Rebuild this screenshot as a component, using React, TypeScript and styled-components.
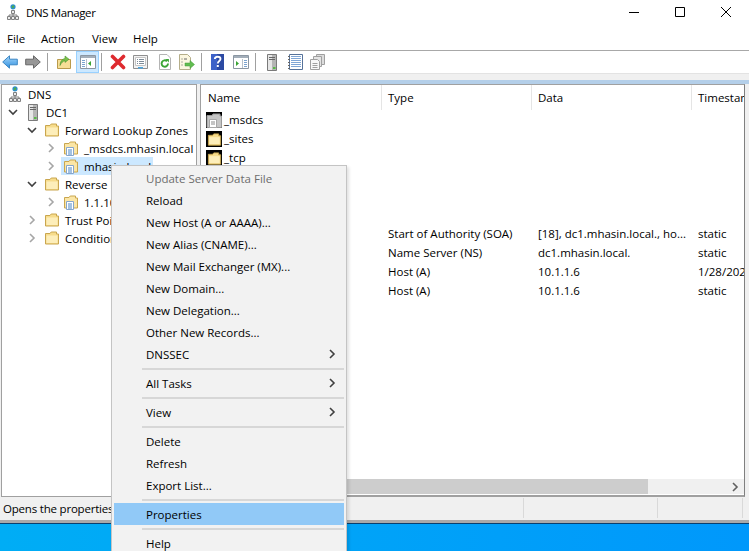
import * as React from "react";
import styled, { createGlobalStyle } from "styled-components";

const GlobalStyle = createGlobalStyle`
  html, body {
    margin: 0;
    padding: 0;
    background: #fff;
  }

  body {
    font-family: "Open Sans", "Noto Sans", sans-serif;
    font-size: 11.5px;
    color: #000;
  }
`;

const Page = styled.div`
  position: relative;
  display: flex;
  flex-direction: column;
  width: 749px;
  height: 551px;
  overflow: hidden;
  background: #fff;
`;

const TitleBar = styled.div`
  display: flex;
  align-items: center;
  height: 27px;
  padding: 0 0 3px 5px;
  box-sizing: border-box;
  flex: none;
`;

const TitleText = styled.span`
  margin-left: 5px;
  letter-spacing: -0.4px;
`;

const WindowButtons = styled.div`
  display: flex;
  margin-left: auto;
  margin-right: 18px;
  gap: 36px;
  align-items: center;
`;

const MenuBar = styled.div`
  display: grid;
  grid-template-columns: 34px 51px 41px auto;
  align-items: center;
  justify-content: start;
  height: 23px;
  padding-left: 7px;
  flex: none;
  border-bottom: 1px solid #a8a8a8;
`;

const Toolbar = styled.div`
  display: flex;
  align-items: center;
  height: 22px;
  flex: none;
  padding-left: 2px;
  border-bottom: 1px solid #e3e3e3;
`;

const ToolButton = styled.div<{ $w: number; $active?: boolean }>`
  display: flex;
  align-items: center;
  justify-content: center;
  width: ${(p) => p.$w}px;
  height: 22px;
  box-sizing: border-box;
  flex: none;
  ${(p) => (p.$active ? "background: #cce8ff; border: 1px solid #99d1ff;" : "")}
`;

const ToolSep = styled.div<{ $l: number; $r: number }>`
  width: 1px;
  height: 18px;
  background: #a0a0a0;
  flex: none;
  margin: 0 ${(p) => p.$r}px 0 ${(p) => p.$l}px;
`;

const Strip = styled.div`
  height: 6px;
  flex: none;
  background: #f0f0f0;
`;

const BlueLine = styled.div`
  height: 4px;
  flex: none;
  background: #b4cfe9;
`;

const Panes = styled.div`
  display: flex;
  flex: none;
  height: 413px;
  background: #f0f0f0;
  padding-left: 1px;
  padding-right: 4px;
`;

const TreePane = styled.div`
  width: 196px;
  box-sizing: border-box;
  flex: none;
  background: #fff;
  border: 1px solid #a0a0a0;
  overflow: hidden;
`;

const TreeRow = styled.div<{ $pad: number }>`
  display: flex;
  align-items: center;
  height: 18px;
  padding-left: ${(p) => p.$pad}px;
  white-space: nowrap;
`;

const Expander = styled.span`
  display: flex;
  align-items: center;
  justify-content: center;
  width: 16px;
  margin-right: 2px;
  flex: none;
`;

const TreeItem = styled.span<{ $selected?: boolean }>`
  display: inline-flex;
  align-items: center;
  gap: 5px;
  height: 18px;
  padding: 0 2px;
  background: ${(p) => (p.$selected ? "#cce8ff" : "transparent")};
`;

const IconBox = styled.span`
  display: flex;
  justify-content: center;
  width: 16px;
`;

const ListPane = styled.div`
  flex: 1;
  min-width: 0;
  margin-left: 3px;
  display: flex;
  flex-direction: column;
  background: #fff;
  border: 1px solid #a0a0a0;
  border-right-color: #808080;
  border-bottom-width: 2px;
  overflow: hidden;
`;

const ListRow = styled.div<{ $header?: boolean }>`
  display: grid;
  grid-template-columns: 181px 150px 160px 1fr;
  height: ${(p) => (p.$header ? "25px" : "19px")};
  flex: none;
  align-items: center;
  white-space: nowrap;
  overflow: hidden;
`;

const HeaderCell = styled.div`
  height: 100%;
  display: flex;
  align-items: center;
  padding-left: 6px;
  border-right: 1px solid #e5e5e5;
  box-sizing: border-box;
  overflow: hidden;

  &:first-child {
    padding-left: 7px;
  }

  &:last-child {
    border-right: 0;
  }
`;

const NameCell = styled.div`
  display: flex;
  align-items: center;
  gap: 2px;
  padding-left: 5px;
`;

const Cell = styled.div`
  padding-left: 6px;
  overflow: hidden;
`;

// name column folders sit on a black box, as in the screenshot
const ListIconBox = styled.span`
  display: flex;
  align-items: flex-end;
  justify-content: center;
  width: 16px;
  height: 16px;
  background: #000;
  flex: none;
`;

const ScrollBar = styled.div`
  margin-top: auto;
  height: 15px;
  flex: none;
  margin-bottom: 1px;
  display: flex;
  background: #f0f0f0;
`;

const ScrollThumb = styled.div`
  width: 447px;
  background: #cdcdcd;
  flex: none;
`;

const ScrollArrow = styled.div`
  margin-left: auto;
  width: 18px;
  display: flex;
  align-items: center;
  justify-content: center;
`;

const StatusBar = styled.div`
  display: grid;
  grid-template-columns: 524px 134px 85px 1fr;
  height: 23px;
  flex: none;
  background: #f0f0f0;
  white-space: nowrap;
`;

const StatusCell = styled.div`
  display: flex;
  align-items: center;
  padding-left: 3px;
  margin: 1px 0 2px;
  border-right: 1px solid #d9d9d9;
  overflow: hidden;
  letter-spacing: -0.2px;
`;

const WindowShadow = styled.div`
  height: 3px;
  flex: none;
  background: #a9a9a9;
`;

const Desktop = styled.div`
  flex: 1;
  border-top: 1px solid #0a3f6e;
  background: linear-gradient(90deg, #00adf5 0%, #0098fb 100%);
`;

const ContextMenu = styled.div`
  position: absolute;
  left: 111px;
  top: 165px;
  width: 236px;
  box-sizing: border-box;
  padding: 1px 2px 2px;
  background: #f2f2f2;
  border: 1px solid #c4c4c4;
  box-shadow: 2px 2px 3px rgba(0, 0, 0, 0.12);
`;

const MenuItem = styled.div<{ $disabled?: boolean; $hover?: boolean }>`
  display: flex;
  align-items: center;
  justify-content: space-between;
  height: 22px;
  padding: 0 8px 0 32px;
  color: ${(p) => (p.$disabled ? "#6d6d6d" : "#000")};
  background: ${(p) => (p.$hover ? "#91c9f7" : "transparent")};
`;

const MenuSep = styled.div`
  height: 2px;
  margin: 3px 0 2px 28px;
  background: #d7d7d7;
`;

const Folder = ({ size = 16 }: { size?: number }) => (
  <svg width={size} height={size} viewBox="0 0 16 16">
    <path d="M1.5 3.5h4.5l1.2-1.5h5.3v2h2v10h-13z" fill="#f7dc8b" stroke="#c9a64f" />
    <path d="M2.5 5.5h11v7.5h-11z" fill="#fdeeba" />
  </svg>
);

const ZoneFolder = () => (
  <svg width="16" height="16" viewBox="0 0 16 16">
    <path d="M1.5 3.5h4.5l1.2-1.5h5.3v2h2v10h-13z" fill="#fbe6a6" stroke="#c9a64f" />
    <path d="M3.5 7.5h7v8h-7z" fill="#fff" stroke="#86a6cc" />
    <path d="M5 10h4M5 12h4M5 14h4" stroke="#4a86c5" />
  </svg>
);

const GrayFolder = () => (
  <svg width="16" height="15" viewBox="0 0 16 15">
    <path d="M1 2.5h5l1-1.5h7v2h1.5v11.5H1z" fill="#c6c6c6" stroke="#9a9a9a" />
    <path d="M3.5 6.5h7v8h-7z" fill="#fff" stroke="#a8a8a8" />
    <path d="M5 9h4M5 11h4" stroke="#8a8a8a" />
  </svg>
);

const DnsIcon = () => (
  <svg width="16" height="17" viewBox="0 0 16 17">
    <circle cx="8" cy="2.8" r="2.6" fill="#2e8fd0" />
    <path d="M6.5 2.5l2-1.5 1 2-2 1.4z" fill="#4cae4c" />
    <path d="M6.5 6.5h3v3h-3zM2.5 12.5h3v3h-3zM10.5 12.5h3v3h-3zM6.5 12.5h3v3h-3z" fill="#ececec" stroke="#808080" />
    <path d="M8 9.5v3M4 12.5V11h8v1.5" fill="none" stroke="#808080" />
  </svg>
);

const ServerIcon = () => (
  <svg width="10" height="17" viewBox="0 0 10 17">
    <path d="M.5 .5h9v16h-9z" fill="#b5b5b5" stroke="#7a7a7a" />
    <path d="M1 1h4v15H1z" fill="#e6e6e6" />
    <path d="M2 3.5h6M2 5.5h6" stroke="#666" />
    <path d="M6 13h2.5v2H6z" fill="#58b947" />
  </svg>
);

const ChevronDown = () => (
  <svg width="10" height="8" viewBox="0 0 10 8">
    <path d="M1 2l4 4 4-4" fill="none" stroke="#404040" strokeWidth="1.6" />
  </svg>
);

const ChevronRight = ({ color = "#a6a6a6" }: { color?: string }) => (
  <svg width="8" height="10" viewBox="0 0 8 10">
    <path d="M2 1l4 4-4 4" fill="none" stroke={color} strokeWidth="1.6" />
  </svg>
);

const BackArrow = () => (
  <svg width="16" height="14" viewBox="0 0 16 14">
    <defs>
      <linearGradient id="backFill" x1="0" y1="0" x2="0" y2="1">
        <stop offset="0" stopColor="#a8d8fa" />
        <stop offset="1" stopColor="#2f8fe0" />
      </linearGradient>
    </defs>
    <path d="M.7 7L7.5 .8v3.4h7.8v5.6H7.5v3.4z" fill="url(#backFill)" stroke="#3b86c4" />
  </svg>
);

const ForwardArrow = () => (
  <svg width="16" height="14" viewBox="0 0 16 14">
    <path d="M15.3 7L8.5 .8v3.4H.7v5.6h7.8v3.4z" fill="#979797" stroke="#666" />
  </svg>
);

const UpFolder = () => (
  <svg width="16" height="16" viewBox="0 0 16 16">
    <path d="M1.5 5.5h13v9h-13z" fill="#f7de96" stroke="#b99a4c" />
    <path d="M4 11.5c0-4 2-6.5 5-7V2l4 3.2-4 3.2V6.7C7 7 5.5 8.5 4 11.5z" fill="#7cc04a" stroke="#4a9430" strokeWidth=".6" />
  </svg>
);

const PaneIcon = ({ side }: { side: "left" | "right" }) => (
  <svg width="16" height="14" viewBox="0 0 16 14">
    <path d="M.5 .5h15v13H.5z" fill="#fff" stroke="#8b96a2" />
    <path d="M1 1h14v2H1z" fill="#a3aeb9" />
    {side === "left" ? (
      <>
        <path d="M2 5.5h3M2 7.5h3M2 9.5h3M2 11.5h3" stroke="#7ba3cf" />
        <path d="M6.5 4v9" stroke="#b8c2cc" />
        <path d="M11 6v5L8 8.5z" fill="#3aa535" />
      </>
    ) : (
      <>
        <path d="M3 6v5l3-2.5z" fill="#3aa535" />
        <path d="M9.5 4v9" stroke="#b8c2cc" />
        <path d="M11 5.5h3M11 7.5h3M11 9.5h3M11 11.5h3" stroke="#7ba3cf" />
      </>
    )}
  </svg>
);

const DeleteIcon = () => (
  <svg width="16" height="16" viewBox="0 0 16 16">
    <path d="M2.5 2.5L13.5 13.5M13.5 2.5L2.5 13.5" stroke="#de2a2f" strokeWidth="3.6" strokeLinecap="round" />
  </svg>
);

const PropsIcon = () => (
  <svg width="15" height="16" viewBox="0 0 15 16">
    <path d="M.5 1.5h14v13H.5z" fill="#f2f2f2" stroke="#8f8f8f" />
    <path d="M2.5 3.5h10v8h-10z" fill="#fff" stroke="#c4c4c4" />
    <path d="M4 5.5h1M6 5.5h5M4 7.5h1M6 7.5h5M4 9.5h1M6 9.5h5" stroke="#7d8a97" />
    <path d="M5 13h5v1.5H5z" fill="#49a6e2" />
  </svg>
);

const RefreshIcon = () => (
  <svg width="14" height="16" viewBox="0 0 14 16">
    <path d="M1.5 .5h7.5l3.5 3.5v11.5h-11z" fill="#fff" stroke="#b4b4b4" />
    <path d="M10 9.5a3.2 3.2 0 1 1-1-2.3" fill="none" stroke="#3aa535" strokeWidth="1.9" />
    <path d="M7.5 5h3.4v3.4z" fill="#3aa535" />
  </svg>
);

const ExportIcon = () => (
  <svg width="16" height="16" viewBox="0 0 16 16">
    <path d="M.5 .5h8l3 3v12h-11z" fill="#fcf7e0" stroke="#b5ae8a" />
    <path d="M2.5 5h1M5 5h3M2.5 8h1M2.5 11h1" stroke="#666" />
    <path d="M6 9h5V6.5l4.5 4-4.5 4V12H6z" fill="#62bd50" stroke="#46993a" strokeWidth=".5" />
  </svg>
);

const HelpIcon = () => (
  <svg width="13" height="16" viewBox="0 0 13 16">
    <path d="M0 0h13v16H0z" fill="#2c4aa3" />
    <path d="M0 0h6v16H0z" fill="#3d62c8" />
    <path d="M3.8 5c0-3 5.7-3 5.7 0 0 2-2.7 2-2.7 4.5" fill="none" stroke="#fff" strokeWidth="1.8" />
    <path d="M5.8 11h2v2h-2z" fill="#fff" />
  </svg>
);

const ListViewIcon = () => (
  <svg width="15" height="16" viewBox="0 0 15 16">
    <path d="M1.5 .5h13v15h-13z" fill="#fff" stroke="#56729a" />
    <path d="M3 2.5h10M3 4.5h10M3 6.5h10M3 8.5h10M3 10.5h10M3 12.5h10" stroke="#7fa6d6" />
    <path d="M0 2.5h2M0 5.5h2M0 8.5h2M0 11.5h2M0 14.5h2" stroke="#666" />
  </svg>
);

const CopyIcon = () => (
  <svg width="15" height="16" viewBox="0 0 15 16">
    <path d="M6.5 .5h8v10h-8z" fill="#dcdcdc" stroke="#a0a0a0" />
    <path d="M3.5 2.5h8v10h-8z" fill="#e4e4e4" stroke="#a0a0a0" />
    <path d="M.5 5.5h7l2 2v8h-9z" fill="#f8f8f8" stroke="#a0a0a0" />
    <path d="M2.5 9.5h5M2.5 11.5h5M2.5 13.5h5" stroke="#a0a0a0" />
  </svg>
);

type Tree = { level: number; label: string; open?: boolean; selected?: boolean; icon: "folder" | "zone" | "server" };

const treeRows: Tree[] = [
  { level: 1, label: "DC1", open: true, icon: "server" },
  { level: 2, label: "Forward Lookup Zones", open: true, icon: "folder" },
  { level: 3, label: "_msdcs.mhasin.local", icon: "zone" },
  { level: 3, label: "mhasin.local", selected: true, icon: "zone" },
  { level: 2, label: "Reverse Lookup Zones", open: true, icon: "folder" },
  { level: 3, label: "1.1.10.in-addr.arpa", icon: "zone" },
  { level: 2, label: "Trust Points", icon: "folder" },
  { level: 2, label: "Conditional Forwarders", icon: "folder" },
];

const records = [
  ["Start of Authority (SOA)", "[18], dc1.mhasin.local., ho...", "static"],
  ["Name Server (NS)", "dc1.mhasin.local.", "static"],
  ["Host (A)", "10.1.1.6", "1/28/202"],
  ["Host (A)", "10.1.1.6", "static"],
];

const TreeIcon = ({ icon }: { icon: Tree["icon"] }) => {
  if (icon === "server") {
    return (
      <IconBox>
        <ServerIcon />
      </IconBox>
    );
  }
  return icon === "zone" ? <ZoneFolder /> : <Folder />;
};

const App: React.FC = () => {
  return (
    <Page>
      <GlobalStyle />
      <TitleBar>
        <IconBox>
          <DnsIcon />
        </IconBox>
        <TitleText>DNS Manager</TitleText>
        <WindowButtons>
          <svg width="10" height="10" viewBox="0 0 10 10">
            <path d="M0 5.5h10" stroke="#000" />
          </svg>
          <svg width="10" height="10" viewBox="0 0 10 10">
            <path d="M.5 .5h9v9h-9z" fill="none" stroke="#000" />
          </svg>
          <svg width="10" height="10" viewBox="0 0 10 10">
            <path d="M0 0l10 10M10 0L0 10" stroke="#000" />
          </svg>
        </WindowButtons>
      </TitleBar>
      <MenuBar>
        <span>File</span>
        <span>Action</span>
        <span>View</span>
        <span>Help</span>
      </MenuBar>
      <Toolbar>
        <ToolButton $w={16}>
          <BackArrow />
        </ToolButton>
        <ToolButton $w={29}>
          <ForwardArrow />
        </ToolButton>
        <ToolSep $l={0} $r={4} />
        <ToolButton $w={24}>
          <UpFolder />
        </ToolButton>
        <ToolButton $w={23} $active>
          <PaneIcon side="left" />
        </ToolButton>
        <ToolSep $l={2} $r={6} />
        <ToolButton $w={20}>
          <DeleteIcon />
        </ToolButton>
        <ToolButton $w={25}>
          <PropsIcon />
        </ToolButton>
        <ToolButton $w={24}>
          <RefreshIcon />
        </ToolButton>
        <ToolButton $w={20}>
          <ExportIcon />
        </ToolButton>
        <ToolSep $l={4} $r={4} />
        <ToolButton $w={23}>
          <HelpIcon />
        </ToolButton>
        <ToolButton $w={24}>
          <PaneIcon side="right" />
        </ToolButton>
        <ToolSep $l={2} $r={4} />
        <ToolButton $w={24}>
          <ServerIcon />
        </ToolButton>
        <ToolButton $w={22}>
          <ListViewIcon />
        </ToolButton>
        <ToolButton $w={22}>
          <CopyIcon />
        </ToolButton>
      </Toolbar>
      <Strip />
      <BlueLine />
      <Panes>
        <TreePane>
          <TreeRow $pad={3}>
            <TreeItem>
              <DnsIcon />
              DNS
            </TreeItem>
          </TreeRow>
          {treeRows.map((row) => (
            <TreeRow key={row.label} $pad={3 + 19 * (row.level - 1)}>
              <Expander>{row.open ? <ChevronDown /> : <ChevronRight />}</Expander>
              <TreeItem $selected={row.selected}>
                <TreeIcon icon={row.icon} />
                {row.label}
              </TreeItem>
            </TreeRow>
          ))}
        </TreePane>
        <ListPane>
          <ListRow $header>
            <HeaderCell>Name</HeaderCell>
            <HeaderCell>Type</HeaderCell>
            <HeaderCell>Data</HeaderCell>
            <HeaderCell>Timestamp</HeaderCell>
          </ListRow>
          {["_msdcs", "_sites", "_tcp"].map((name, i) => (
            <ListRow key={name}>
              <NameCell>
                <ListIconBox>
                  {i === 0 ? <GrayFolder /> : <Folder size={15} />}
                </ListIconBox>
                {name}
              </NameCell>
            </ListRow>
          ))}
          {[0, 1, 2].map((i) => (
            <ListRow key={i} />
          ))}
          {records.map((rec, i) => (
            <ListRow key={i}>
              <Cell />
              <Cell>{rec[0]}</Cell>
              <Cell>{rec[1]}</Cell>
              <Cell>{rec[2]}</Cell>
            </ListRow>
          ))}
          <ScrollBar>
            <ScrollThumb />
            <ScrollArrow>
              <ChevronRight color="#606060" />
            </ScrollArrow>
          </ScrollBar>
        </ListPane>
      </Panes>
      <StatusBar>
        <StatusCell>Opens the properties dialog box for the current selection.</StatusCell>
        <StatusCell />
        <StatusCell />
        <div />
      </StatusBar>
      <WindowShadow />
      <Desktop />
      <ContextMenu>
        <MenuItem $disabled>Update Server Data File</MenuItem>
        <MenuItem>Reload</MenuItem>
        <MenuItem>New Host (A or AAAA)...</MenuItem>
        <MenuItem>New Alias (CNAME)...</MenuItem>
        <MenuItem>New Mail Exchanger (MX)...</MenuItem>
        <MenuItem>New Domain...</MenuItem>
        <MenuItem>New Delegation...</MenuItem>
        <MenuItem>Other New Records...</MenuItem>
        <MenuItem>
          DNSSEC
          <ChevronRight color="#404040" />
        </MenuItem>
        <MenuSep />
        <MenuItem>
          All Tasks
          <ChevronRight color="#404040" />
        </MenuItem>
        <MenuSep />
        <MenuItem>
          View
          <ChevronRight color="#404040" />
        </MenuItem>
        <MenuSep />
        <MenuItem>Delete</MenuItem>
        <MenuItem>Refresh</MenuItem>
        <MenuItem>Export List...</MenuItem>
        <MenuSep />
        <MenuItem $hover>Properties</MenuItem>
        <MenuSep />
        <MenuItem>Help</MenuItem>
      </ContextMenu>
    </Page>
  );
};

export default App;
